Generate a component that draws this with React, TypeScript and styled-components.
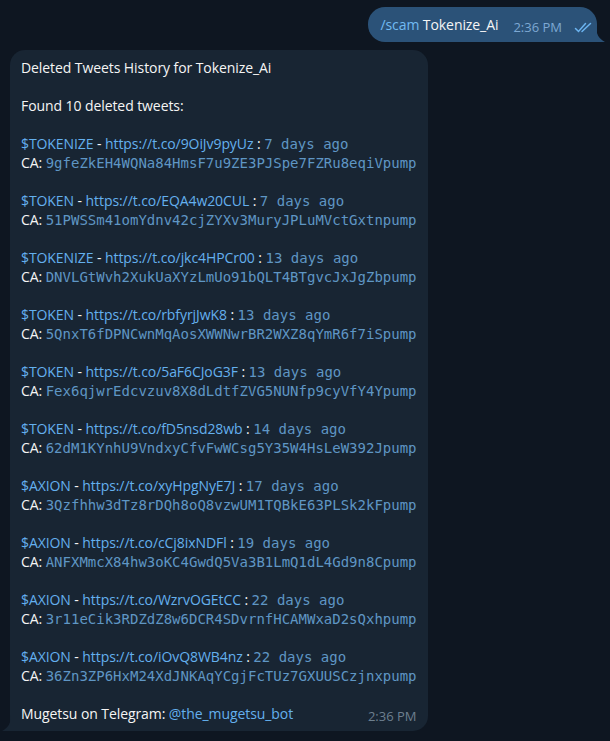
import React from 'react'
import styled, { createGlobalStyle } from 'styled-components'

const GlobalStyle = createGlobalStyle`
  html, body {
    margin: 0;
    padding: 0;
    background: #0e1621;
  }
  body {
    font-family: 'Open Sans', 'Noto Sans', sans-serif;
    -webkit-font-smoothing: antialiased;
  }
`

const Chat = styled.div`
  width: 610px;
  height: 741px;
  box-sizing: border-box;
  padding: 7px 13px 0 10px;
  display: flex;
  flex-direction: column;
  gap: 8px;
  overflow: hidden;
`

const Row = styled.div<{ $out?: boolean }>`
  display: flex;
  justify-content: ${({ $out }) => ($out ? 'flex-end' : 'flex-start')};
`

const Bubble = styled.div<{ $out?: boolean }>`
  position: relative;
  box-sizing: border-box;
  background: ${({ $out }) => ($out ? '#2b5278' : '#182533')};
  color: #f5f5f5;
  font-size: 14px;
  line-height: 19px;
  letter-spacing: -0.08px;
  border-radius: ${({ $out }) => ($out ? '17px 17px 0 17px' : '15px 15px 15px 0')};
  padding: ${({ $out }) => ($out ? '8px 4px 8px 12px' : '8px 11px 8px 11px')};
`

const Tail = styled.svg<{ $out?: boolean }>`
  position: absolute;
  bottom: 0;
  width: 9px;
  height: 16px;
  ${({ $out }) => ($out ? 'right: -8px;' : 'left: -8px;')}
`

const OutRow = styled.div`
  display: flex;
  align-items: center;
  height: 19px;
`

const Lines = styled.div`
  white-space: pre;
`

const Line = styled.div`
  height: 19px;
  line-height: 19px;
`

const Cmd = styled.span`
  color: #71baf2;
`

const Link = styled.span`
  color: #64b0ee;
`

// contract addresses and ages come through as inline code
const Mono = styled.span`
  font-family: 'DejaVu Sans Mono', monospace;
  font-size: 14px;
  line-height: 19px;
  letter-spacing: 0;
  color: #5f96c4;
`

const Meta = styled.span<{ $out?: boolean }>`
  display: inline-flex;
  align-items: center;
  gap: 12px;
  margin-left: 15px;
  font-size: 13px;
  line-height: 19px;
  letter-spacing: 0;
  color: ${({ $out }) => ($out ? '#7da8d3' : '#6d7f8f')};
  position: relative;
  top: 3px;
`

const Footer = styled.div`
  display: flex;
  justify-content: space-between;
  height: 19px;
`

type Tweet = { ticker: string; url: string; age: string; ca: string }

const tweets: Tweet[] = [
  { ticker: '$TOKENIZE', url: 'https://t.co/9OiJv9pyUz', age: '7 days ago', ca: '9gfeZkEH4WQNa84HmsF7u9ZE3PJSpe7FZRu8eqiVpump' },
  { ticker: '$TOKEN', url: 'https://t.co/EQA4w20CUL', age: '7 days ago', ca: '51PWSSm41omYdnv42cjZYXv3MuryJPLuMVctGxtnpump' },
  { ticker: '$TOKENIZE', url: 'https://t.co/jkc4HPCr00', age: '13 days ago', ca: 'DNVLGtWvh2XukUaXYzLmUo91bQLT4BTgvcJxJgZbpump' },
  { ticker: '$TOKEN', url: 'https://t.co/rbfyrjJwK8', age: '13 days ago', ca: '5QnxT6fDPNCwnMqAosXWWNwrBR2WXZ8qYmR6f7iSpump' },
  { ticker: '$TOKEN', url: 'https://t.co/5aF6CJoG3F', age: '13 days ago', ca: 'Fex6qjwrEdcvzuv8X8dLdtfZVG5NUNfp9cyVfY4Ypump' },
  { ticker: '$TOKEN', url: 'https://t.co/fD5nsd28wb', age: '14 days ago', ca: '62dM1KYnhU9VndxyCfvFwWCsg5Y35W4HsLeW392Jpump' },
  { ticker: '$AXION', url: 'https://t.co/xyHpgNyE7J', age: '17 days ago', ca: '3Qzfhhw3dTz8rDQh8oQ8vzwUM1TQBkE63PLSk2kFpump' },
  { ticker: '$AXION', url: 'https://t.co/cCj8ixNDFl', age: '19 days ago', ca: 'ANFXMmcX84hw3oKC4GwdQ5Va3B1LmQ1dL4Gd9n8Cpump' },
  { ticker: '$AXION', url: 'https://t.co/WzrvOGEtCC', age: '22 days ago', ca: '3r11eCik3RDZdZ8w6DCR4SDvrnfHCAMWxaD2sQxhpump' },
  { ticker: '$AXION', url: 'https://t.co/iOvQ8WB4nz', age: '22 days ago', ca: '36Zn3ZP6HxM24XdJNKAqYCgjFcTUz7GXUUSCzjnxpump' },
]

function Checks() {
  return (
    <svg width="19" height="11" viewBox="0 0 19 11" fill="none" stroke="#6cb4f0" strokeWidth="1.5" strokeLinecap="round">
      <path d="M1.5 6.5 L4.5 9.5 L11.5 1.5" />
      <path d="M8 9.5 L16.5 1.5" />
    </svg>
  )
}

function BubbleTail({ out, color }: { out?: boolean; color: string }) {
  return (
    <Tail $out={out} viewBox="0 0 9 16">
      {out ? (
        <path d="M0 0 C0 8 3 13 9 16 L0 16 Z" fill={color} />
      ) : (
        <path d="M9 0 C9 8 6 13 0 16 L9 16 Z" fill={color} />
      )}
    </Tail>
  )
}

export default function App() {
  return (
    <>
      <GlobalStyle />
      <Chat>
        <Row $out>
          <Bubble $out>
            <OutRow>
              <span>
                <Cmd>/scam</Cmd> Tokenize_Ai
              </span>
              <Meta $out>
                2:36 PM
                <Checks />
              </Meta>
            </OutRow>
            <BubbleTail out color="#2b5278" />
          </Bubble>
        </Row>

        <Row>
          <Bubble>
            <Lines>
              <Line>Deleted Tweets History for Tokenize_Ai</Line>
              <Line />
              <Line>Found 10 deleted tweets:</Line>
              <Line />
              {tweets.map((t, i) => (
                <React.Fragment key={i}>
                  <Line>
                    <Link>{t.ticker}</Link> - <Link>{t.url}</Link> : <Mono>{t.age}</Mono>
                  </Line>
                  <Line>
                    CA: <Mono>{t.ca}</Mono>
                  </Line>
                  <Line />
                </React.Fragment>
              ))}
              <Footer>
                <span>
                  Mugetsu on Telegram: <Link>@the_mugetsu_bot</Link>
                </span>
                <Meta>2:36 PM</Meta>
              </Footer>
            </Lines>
            <BubbleTail color="#182533" />
          </Bubble>
        </Row>
      </Chat>
    </>
  )
}
